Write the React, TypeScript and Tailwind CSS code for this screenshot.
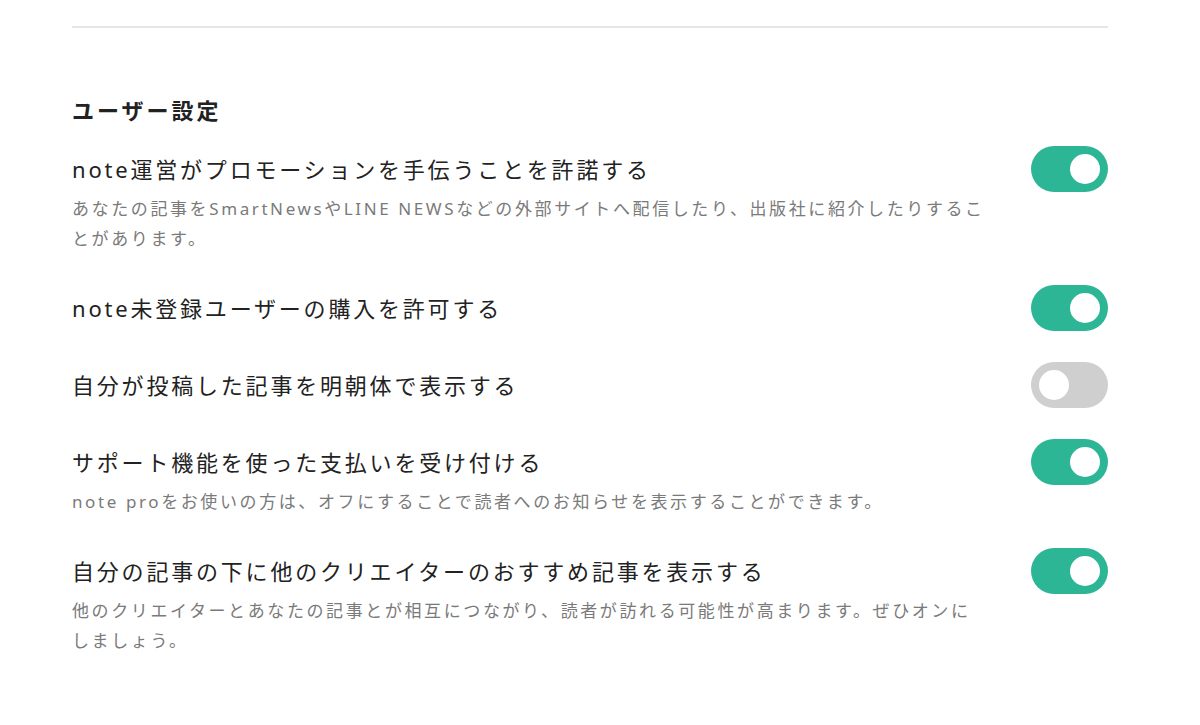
import { useState } from "react";

type Item = {
  title: string;
  desc?: string;
  on: boolean;
};

const items: Item[] = [
  {
    title: "note運営がプロモーションを手伝うことを許諾する",
    desc: "あなたの記事をSmartNewsやLINE NEWSなどの外部サイトへ配信したり、出版社に紹介したりすることがあります。",
    on: true,
  },
  { title: "note未登録ユーザーの購入を許可する", on: true },
  { title: "自分が投稿した記事を明朝体で表示する", on: false },
  {
    title: "サポート機能を使った支払いを受け付ける",
    desc: "note proをお使いの方は、オフにすることで読者へのお知らせを表示することができます。",
    on: true,
  },
  {
    title: "自分の記事の下に他のクリエイターのおすすめ記事を表示する",
    desc: "他のクリエイターとあなたの記事とが相互につながり、読者が訪れる可能性が高まります。ぜひオンにしましょう。",
    on: true,
  },
];

function Toggle({ on, onClick }: { on: boolean; onClick: () => void }) {
  return (
    <button
      onClick={onClick}
      className={`flex h-[46px] w-[77px] shrink-0 items-center rounded-full p-2 ${
        on ? "justify-end bg-[#2cb696]" : "justify-start bg-[#cfcfcf]"
      }`}
    >
      <span className="block h-[30px] w-[30px] rounded-full bg-white" />
    </button>
  );
}

export default function App() {
  const [state, setState] = useState(items.map((i) => i.on));

  return (
    <div
      className="min-h-[725px] w-[1200px] bg-white"
      style={{ fontFamily: '"Noto Sans", "Noto Sans CJK JP", sans-serif' }}
    >
      <div className="ml-[72px] w-[1036px] pt-[26px]">
        {/* 区切り線 */}
        <div className="h-[2px] w-full bg-[#e6e6e6]" />

        {/* ユーザー設定 */}
        <h2 className="mt-[67px] text-[22px] font-bold leading-[30px] tracking-[3px] text-[#222]">
          ユーザー設定
        </h2>

        <div className="mt-[21px] flex flex-col gap-[31px]">
          {items.map((item, i) => (
            <div key={i} className="flex items-start justify-between">
              <div className="w-[914px]">
                <div className="flex h-[46px] items-center text-[22px] tracking-[2.8px] text-[#222]">
                  {item.title}
                </div>
                {item.desc && (
                  <p className="mt-[2px] text-[17px] leading-[30px] tracking-[2.6px] text-[#7a7a7a]">
                    {item.desc}
                  </p>
                )}
              </div>
              <Toggle
                on={state[i]}
                onClick={() =>
                  setState(state.map((s, j) => (j === i ? !s : s)))
                }
              />
            </div>
          ))}
        </div>
      </div>
    </div>
  );
}
